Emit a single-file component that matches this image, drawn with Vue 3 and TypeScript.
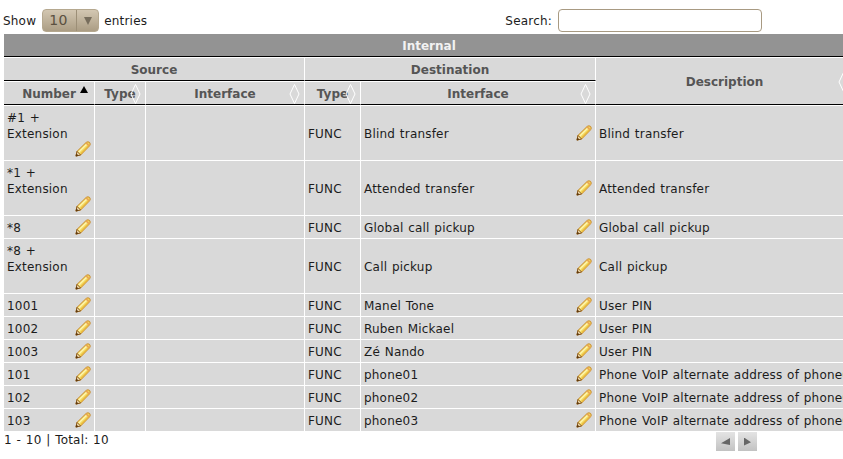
<script setup lang="ts">
interface Row { num: string; wrap?: boolean; iface: string; desc: string }
const rows: Row[] = [
  { num: '#1 + Extension', wrap: true, iface: 'Blind transfer', desc: 'Blind transfer' },
  { num: '*1 + Extension', wrap: true, iface: 'Attended transfer', desc: 'Attended transfer' },
  { num: '*8', iface: 'Global call pickup', desc: 'Global call pickup' },
  { num: '*8 + Extension', wrap: true, iface: 'Call pickup', desc: 'Call pickup' },
  { num: '1001', iface: 'Manel Tone', desc: 'User PIN' },
  { num: '1002', iface: 'Ruben Mickael', desc: 'User PIN' },
  { num: '1003', iface: 'Zé Nando', desc: 'User PIN' },
  { num: '101', iface: 'phone01', desc: 'Phone VoIP alternate address of phone01' },
  { num: '102', iface: 'phone02', desc: 'Phone VoIP alternate address of phone02' },
  { num: '103', iface: 'phone03', desc: 'Phone VoIP alternate address of phone03' },
]
</script>

<template>
  <div class="page">
    <svg width="0" height="0" class="defs">
      <symbol id="pencil" viewBox="0 0 16 16">
        <path d="M1 15 L2 10.4 L11.2 1.4 Q13 0.2 14.6 1.4 Q15.9 3 14.6 4.8 L5.6 14 Z" fill="#f4d85e" stroke="#c88a2c" stroke-width="1" stroke-linejoin="round" />
        <path d="M3.6 11.2 L12 3" stroke="#fdf6b0" stroke-width="1.4" fill="none" />
        <path d="M6 12.6 L13.4 5.2" stroke="#e6b53c" stroke-width="1.2" fill="none" />
        <path d="M11 1.8 L14.4 5" stroke="#eaa552" stroke-width="1.6" fill="none" />
        <path d="M1 15 L2 10.4 L5.6 14 Z" fill="#f2dcae" stroke="#8a5a1e" stroke-width="1" stroke-linejoin="round" />
        <path d="M0.6 15.4 L1.4 12.4 L3.6 14.6 Z" fill="#5f3a10" />
      </symbol>
      <symbol id="sortboth" viewBox="0 0 11 20">
        <path d="M5.5 0.5 L10 10 L5.5 19.5 L1 10 Z" fill="none" stroke="#fff" stroke-width="1" />
      </symbol>
    </svg>

    <div class="toolbar">
      <div class="length">
        <span>Show</span>
        <div class="select">
          <span class="select-value">10</span>
          <span class="select-arrow"><i class="arrow"></i></span>
        </div>
        <span>entries</span>
      </div>
      <label class="search">
        <span>Search:</span>
        <input type="text" />
      </label>
    </div>

    <table class="grid">
      <colgroup>
        <col class="c1" /><col class="c2" /><col class="c3" /><col class="c4" /><col class="c5" /><col class="c6" />
      </colgroup>
      <thead>
        <tr class="title"><th colspan="6">Internal</th></tr>
        <tr class="group">
          <th colspan="3">Source</th>
          <th colspan="2">Destination</th>
          <th rowspan="2" class="sortable desc-head">Description<svg class="sort"><use href="#sortboth" /></svg></th>
        </tr>
        <tr class="sub">
          <th class="sortable">Number<i class="sort-up"></i></th>
          <th class="sortable">Type<svg class="sort"><use href="#sortboth" /></svg></th>
          <th class="sortable">Interface<svg class="sort"><use href="#sortboth" /></svg></th>
          <th class="sortable">Type<svg class="sort"><use href="#sortboth" /></svg></th>
          <th class="sortable">Interface<svg class="sort"><use href="#sortboth" /></svg></th>
        </tr>
      </thead>
      <tbody>
        <tr v-for="r in rows" :key="r.num">
          <td>
            <div class="cell" :class="{ wrap: r.wrap }">
              <span class="cell-text">{{ r.num }}</span>
              <svg class="pencil"><use href="#pencil" /></svg>
            </div>
          </td>
          <td></td>
          <td></td>
          <td>FUNC</td>
          <td>
            <div class="cell">
              <span class="cell-text">{{ r.iface }}</span>
              <svg class="pencil"><use href="#pencil" /></svg>
            </div>
          </td>
          <td class="nowrap">{{ r.desc }}</td>
        </tr>
      </tbody>
    </table>

    <div class="footer">
      <span>1 - 10 | Total: 10</span>
      <div class="pager">
        <span class="page-btn"><i class="tri-left"></i></span>
        <span class="page-btn"><i class="tri-right"></i></span>
      </div>
    </div>
  </div>
</template>

<style scoped>
.page {
  width: 843px;
  height: 459px;
  overflow: hidden;
  font-family: "DejaVu Sans", sans-serif;
  font-size: 12px;
  letter-spacing: 0.2px;
  word-spacing: 0.7px;
  color: #1c1c1c;
  box-sizing: border-box;
  padding-left: 4px;
}
.defs { position: absolute; }
.toolbar {
  height: 34px;
  display: flex;
  align-items: flex-start;
  padding-top: 9px;
  box-sizing: border-box;
  width: 758px;
  justify-content: space-between;
}
.length, .search {
  display: flex;
  align-items: center;
  height: 23px;
}
.length > span:first-child { margin-left: -1px; }
.select {
  width: 57px;
  height: 23px;
  margin: 0 5px 0 6px;
  box-sizing: border-box;
  border: 1px solid #b5a88f;
  border-radius: 4px;
  background: linear-gradient(#d3c7b2, #ab9d84);
  display: flex;
  color: #5a5040;
  font-size: 14px;
}
.select-value {
  flex: 1;
  padding-left: 6px;
  line-height: 21px;
  letter-spacing: 0.5px;
}
.select-arrow {
  width: 21px;
  border-left: 1px solid #9c8f77;
  display: flex;
  align-items: center;
  justify-content: center;
}
.arrow {
  border-left: 4.5px solid transparent;
  border-right: 4.5px solid transparent;
  border-top: 8px solid #776d5c;
}
.search span { margin-right: 6px; }
.search input {
  width: 204px;
  height: 23px;
  box-sizing: border-box;
  border: 1px solid #a89a82;
  border-radius: 4px;
  background: #fff;
  outline: none;
}
.grid {
  table-layout: fixed;
  width: 850px;
  border-collapse: separate;
  border-spacing: 0;
  background: #d9d9d9;
}
.c1 { width: 91px; }
.c2 { width: 51px; }
.c3 { width: 159px; }
.c4 { width: 56px; }
.c5 { width: 235px; }
.c6 { width: 258px; }
th {
  font-weight: bold;
  color: #555;
  padding: 2px 0 0;
  height: 22px;
  position: relative;
  border-right: 1px solid #fff;
  letter-spacing: 0;
  word-spacing: 0;
  white-space: nowrap;
}
.title th {
  background: #939393;
  color: #f2f2f2;
  border-right: 0;
  border-bottom: 1px solid #000;
  height: 23px;
  box-sizing: border-box;
}
.group th {
  border-top: 1px solid #fff;
  border-bottom: 1px solid #000;
  height: 24px;
  box-sizing: border-box;
}
.sub th {
  border-top: 1px solid #fff;
  border-bottom: 1px solid #000;
  height: 24px;
  box-sizing: border-box;
}
.group .desc-head { height: auto; }
.sort {
  position: absolute;
  right: 4px;
  top: 2px;
  width: 11px;
  height: 20px;
}
.desc-head .sort { top: 14px; right: 4px; }
.sort-up {
  position: absolute;
  left: 76px;
  top: 4px;
  border-left: 4.5px solid transparent;
  border-right: 4.5px solid transparent;
  border-bottom: 7px solid #000;
}
td {
  padding: 4px 3px 2px;
  line-height: 16px;
  border-right: 1px solid #fff;
  border-top: 1px solid #fff;
  vertical-align: middle;
  height: 16px;
  overflow: hidden;
}
.nowrap { white-space: nowrap; }
.cell {
  display: flex;
  justify-content: space-between;
  align-items: center;
}
.cell.wrap { flex-wrap: wrap; }
.cell.wrap .cell-text { flex-basis: 100%; width: 100%; }
.cell.wrap .pencil { margin-left: auto; }
.pencil {
  width: 16px;
  height: 16px;
  margin-top: -1px;
  margin-bottom: 1px;
  flex: none;
}
.footer {
  display: flex;
  justify-content: space-between;
  width: 753px;
  height: 24px;
}
.footer > span { padding-top: 1px; line-height: 16px; }
.pager { display: flex; gap: 3px; padding-top: 1px; }
.page-btn {
  width: 19px;
  height: 19px;
  background: linear-gradient(#e4e4e4, #c2c2c2);
  display: flex;
  align-items: center;
  justify-content: center;
}
.tri-left {
  width: 9px;
  height: 7px;
  background: #666;
  clip-path: polygon(0 75%, 100% 0, 100% 100%);
}
.tri-right {
  width: 7px;
  height: 8px;
  background: #666;
  clip-path: polygon(0 0, 100% 60%, 0 100%);
}
</style>

<style>
html, body { overflow: hidden; background: #fff; }
</style>
